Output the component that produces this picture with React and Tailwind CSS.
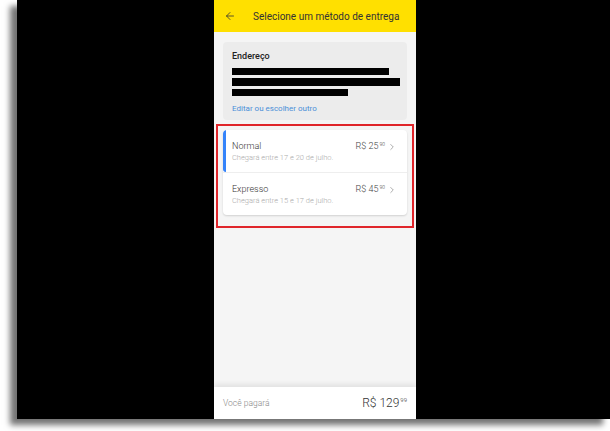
import { ArrowLeft, ChevronRight } from 'lucide-react';

function Price({ main, cents, className = '' }) {
  return (
    <span className={`flex items-start text-[#444] ${className}`}>
      <span>R$ {main}</span>
      <span className="ml-[1px] text-[5px] leading-none mt-[1px]">{cents}</span>
    </span>
  );
}

function ShippingRow({ title, subtitle, main, cents, active }) {
  return (
    <div className="relative flex h-[42px] items-start justify-between pl-[9px] pr-[10px] pt-[11px]">
      {active && <div className="absolute left-0 top-0 h-full w-[3px] rounded-l bg-[#3483fa]" />}
      <div className="flex flex-col gap-[1px]">
        <span className="text-[9px] font-light leading-[11px] text-[#333]">{title}</span>
        <span className="text-[7.5px] font-light leading-[10px] text-[#aaa]">{subtitle}</span>
      </div>
      <div className="flex items-center gap-[2px]">
        <Price main={main} cents={cents} className="text-[9px] font-light leading-[11px]" />
        <ChevronRight size={10} strokeWidth={1.3} className="text-[#666]" />
      </div>
    </div>
  );
}

export default function App() {
  return (
    <div className="h-[431px] w-[610px] overflow-hidden bg-white" style={{ fontFamily: 'Roboto, "Liberation Sans", sans-serif' }}>
      <div className="ml-[17px] h-[419px] w-[593px] bg-black shadow-[-7px_6px_6px_rgba(0,0,0,0.55)]">
        <div className="ml-[197px] flex h-full w-[202px] flex-col bg-[#f5f5f5]">
          {/* Header */}
          <div className="flex h-[32px] shrink-0 items-center bg-[#ffe000] pl-[10px]">
            <ArrowLeft size={12} strokeWidth={1.6} className="text-[#333]" />
            <span className="ml-[17px] text-[10px] text-[#333]">Selecione um método de entrega</span>
          </div>

          {/* Address */}
          <div className="mx-[9px] mt-[10px] h-[78px] rounded-[4px] bg-[#ececec] px-[9px] pt-[9px]">
            <div className="text-[9px] font-medium leading-[11px] text-[#222]">Endereço</div>
            <div className="mt-[6px] flex flex-col gap-[3px]">
              <div className="h-[7px] w-[157px] bg-black" />
              <div className="h-[8px] w-[168px] bg-black" />
              <div className="h-[7px] w-[116px] bg-black" />
            </div>
            <div className="mt-[8px] text-[8px] leading-[9px] text-[#4b8fd8]">Editar ou escolher outro</div>
          </div>

          {/* Highlight */}
          <div className="mx-[2px] mt-[4px] border-2 border-[#e0262b] px-[5px] pb-[11px] pt-[4px]">
            <div className="overflow-hidden rounded-[4px] bg-white shadow-[0_1px_2px_rgba(0,0,0,0.15)]">
              <ShippingRow title="Normal" subtitle="Chegará entre 17 e 20 de julho." main="25" cents="90" active />
              <div className="h-px bg-[#eeeeee]" />
              <ShippingRow title="Expresso" subtitle="Chegará entre 15 e 17 de julho." main="45" cents="90" />
            </div>
          </div>

          <div className="flex-1" />

          {/* Footer */}
          <div className="flex h-[32px] shrink-0 items-center justify-between bg-white pl-[9px] pr-[9px] shadow-[0_-3px_5px_rgba(0,0,0,0.08)]">
            <span className="text-[8.5px] font-light text-[#888]">Você pagará</span>
            <span className="flex items-start text-[12px] font-light leading-none text-[#333]">
              <span>R$ 129</span>
              <span className="ml-[1px] text-[6px] leading-none">99</span>
            </span>
          </div>
        </div>
      </div>
    </div>
  );
}
